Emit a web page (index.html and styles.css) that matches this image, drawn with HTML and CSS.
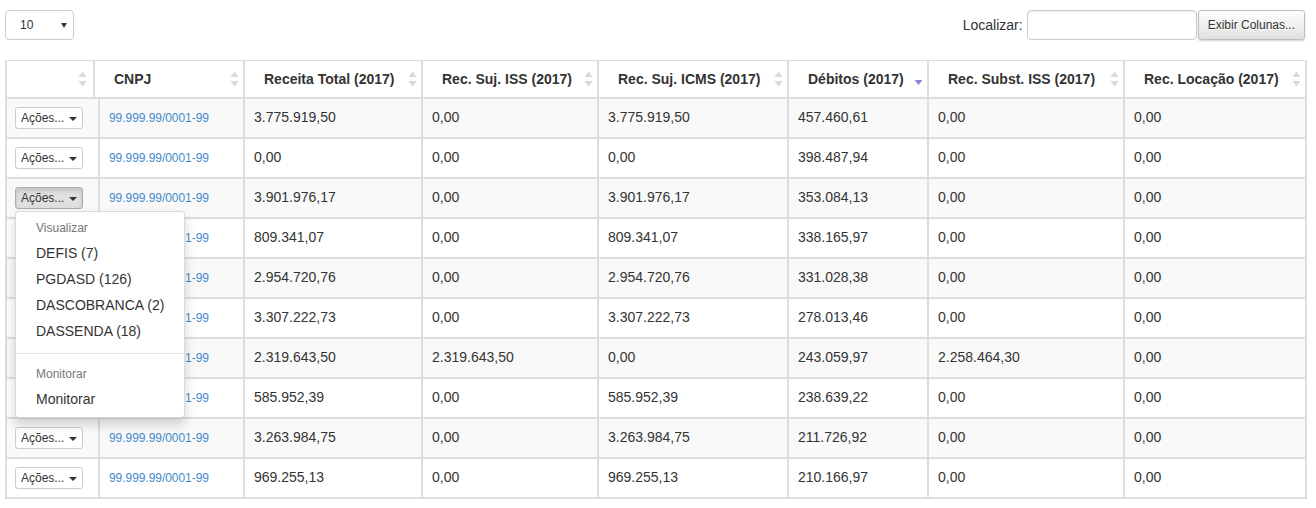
FILE: index.html
```html
<!DOCTYPE html>
<html lang="pt-BR">
<head>
<meta charset="utf-8">
<title>Tabela</title>
<link rel="stylesheet" href="styles.css">
</head>
<body>
<div class="page">
  <div class="toolbar">
    <div class="length">
      <span>10</span>
      <svg class="length-arrow" width="6" height="5" viewBox="0 0 6 5"><path d="M0 0 L6 0 L3 5 Z"/></svg>
    </div>
    <div class="filter">
      <label class="filter-label">Localizar:</label>
      <div class="search"></div>
      <button class="colvis">Exibir Colunas...</button>
    </div>
  </div>

  <div class="grid">
    <div class="thead">
      <div class="th th-first"><span></span><svg class="sort" width="9" height="16" viewBox="0 0 9 16"><path d="M0.5 6 L4.5 0.5 L8.5 6 Z M0.5 10 L4.5 15.5 L8.5 10 Z"/></svg></div>
      <div class="th"><span>CNPJ</span><svg class="sort" width="9" height="16" viewBox="0 0 9 16"><path d="M0.5 6 L4.5 0.5 L8.5 6 Z M0.5 10 L4.5 15.5 L8.5 10 Z"/></svg></div>
      <div class="th"><span>Receita Total (2017)</span><svg class="sort" width="9" height="16" viewBox="0 0 9 16"><path d="M0.5 6 L4.5 0.5 L8.5 6 Z M0.5 10 L4.5 15.5 L8.5 10 Z"/></svg></div>
      <div class="th"><span>Rec. Suj. ISS (2017)</span><svg class="sort" width="9" height="16" viewBox="0 0 9 16"><path d="M0.5 6 L4.5 0.5 L8.5 6 Z M0.5 10 L4.5 15.5 L8.5 10 Z"/></svg></div>
      <div class="th"><span>Rec. Suj. ICMS (2017)</span><svg class="sort" width="9" height="16" viewBox="0 0 9 16"><path d="M0.5 6 L4.5 0.5 L8.5 6 Z M0.5 10 L4.5 15.5 L8.5 10 Z"/></svg></div>
      <div class="th"><span>Débitos (2017)</span><svg class="sort sort-desc" width="9" height="16" viewBox="0 0 9 16"><path d="M0.5 9 L8.5 9 L4.5 14 Z"/></svg></div>
      <div class="th"><span>Rec. Subst. ISS (2017)</span><svg class="sort" width="9" height="16" viewBox="0 0 9 16"><path d="M0.5 6 L4.5 0.5 L8.5 6 Z M0.5 10 L4.5 15.5 L8.5 10 Z"/></svg></div>
      <div class="th th-last"><span>Rec. Locação (2017)</span><svg class="sort" width="9" height="16" viewBox="0 0 9 16"><path d="M0.5 6 L4.5 0.5 L8.5 6 Z M0.5 10 L4.5 15.5 L8.5 10 Z"/></svg></div>
    </div>

    <div class="tbody">
      <div class="tr">
        <div class="td"><div class="btn-group"><button class="btn-xs">Ações... <span class="caret"></span></button></div></div>
        <div class="td"><a class="cnpj" href="#">99.999.99/0001-99</a></div>
        <div class="td">3.775.919,50</div><div class="td">0,00</div><div class="td">3.775.919,50</div><div class="td">457.460,61</div><div class="td">0,00</div><div class="td td-last">0,00</div>
      </div>
      <div class="tr">
        <div class="td"><div class="btn-group"><button class="btn-xs">Ações... <span class="caret"></span></button></div></div>
        <div class="td"><a class="cnpj" href="#">99.999.99/0001-99</a></div>
        <div class="td">0,00</div><div class="td">0,00</div><div class="td">0,00</div><div class="td">398.487,94</div><div class="td">0,00</div><div class="td td-last">0,00</div>
      </div>
      <div class="tr">
        <div class="td"><div class="btn-group"><button class="btn-xs active">Ações... <span class="caret"></span></button>
          <div class="menu">
            <div class="menu-header">Visualizar</div>
            <a class="menu-item" href="#">DEFIS (7)</a>
            <a class="menu-item" href="#">PGDASD (126)</a>
            <a class="menu-item" href="#">DASCOBRANCA (2)</a>
            <a class="menu-item" href="#">DASSENDA (18)</a>
            <div class="menu-divider"></div>
            <div class="menu-header">Monitorar</div>
            <a class="menu-item" href="#">Monitorar</a>
          </div>
        </div></div>
        <div class="td"><a class="cnpj" href="#">99.999.99/0001-99</a></div>
        <div class="td">3.901.976,17</div><div class="td">0,00</div><div class="td">3.901.976,17</div><div class="td">353.084,13</div><div class="td">0,00</div><div class="td td-last">0,00</div>
      </div>
      <div class="tr">
        <div class="td"><div class="btn-group"><button class="btn-xs">Ações... <span class="caret"></span></button></div></div>
        <div class="td"><a class="cnpj" href="#">99.999.99/0001-99</a></div>
        <div class="td">809.341,07</div><div class="td">0,00</div><div class="td">809.341,07</div><div class="td">338.165,97</div><div class="td">0,00</div><div class="td td-last">0,00</div>
      </div>
      <div class="tr">
        <div class="td"><div class="btn-group"><button class="btn-xs">Ações... <span class="caret"></span></button></div></div>
        <div class="td"><a class="cnpj" href="#">99.999.99/0001-99</a></div>
        <div class="td">2.954.720,76</div><div class="td">0,00</div><div class="td">2.954.720,76</div><div class="td">331.028,38</div><div class="td">0,00</div><div class="td td-last">0,00</div>
      </div>
      <div class="tr">
        <div class="td"><div class="btn-group"><button class="btn-xs">Ações... <span class="caret"></span></button></div></div>
        <div class="td"><a class="cnpj" href="#">99.999.99/0001-99</a></div>
        <div class="td">3.307.222,73</div><div class="td">0,00</div><div class="td">3.307.222,73</div><div class="td">278.013,46</div><div class="td">0,00</div><div class="td td-last">0,00</div>
      </div>
      <div class="tr">
        <div class="td"><div class="btn-group"><button class="btn-xs">Ações... <span class="caret"></span></button></div></div>
        <div class="td"><a class="cnpj" href="#">99.999.99/0001-99</a></div>
        <div class="td">2.319.643,50</div><div class="td">2.319.643,50</div><div class="td">0,00</div><div class="td">243.059,97</div><div class="td">2.258.464,30</div><div class="td td-last">0,00</div>
      </div>
      <div class="tr">
        <div class="td"><div class="btn-group"><button class="btn-xs">Ações... <span class="caret"></span></button></div></div>
        <div class="td"><a class="cnpj" href="#">99.999.99/0001-99</a></div>
        <div class="td">585.952,39</div><div class="td">0,00</div><div class="td">585.952,39</div><div class="td">238.639,22</div><div class="td">0,00</div><div class="td td-last">0,00</div>
      </div>
      <div class="tr">
        <div class="td"><div class="btn-group"><button class="btn-xs">Ações... <span class="caret"></span></button></div></div>
        <div class="td"><a class="cnpj" href="#">99.999.99/0001-99</a></div>
        <div class="td">3.263.984,75</div><div class="td">0,00</div><div class="td">3.263.984,75</div><div class="td">211.726,92</div><div class="td">0,00</div><div class="td td-last">0,00</div>
      </div>
      <div class="tr">
        <div class="td"><div class="btn-group"><button class="btn-xs">Ações... <span class="caret"></span></button></div></div>
        <div class="td"><a class="cnpj" href="#">99.999.99/0001-99</a></div>
        <div class="td">969.255,13</div><div class="td">0,00</div><div class="td">969.255,13</div><div class="td">210.166,97</div><div class="td">0,00</div><div class="td td-last">0,00</div>
      </div>
    </div>
  </div>
</div>
</body>
</html>
```

FILE: styles.css
```css
* { box-sizing: border-box; }

body {
  margin: 0;
  background: #fff;
  color: #333;
  font-family: "Liberation Sans", Arial, Helvetica, sans-serif;
  font-size: 14px;
  line-height: 20px;
}

.page {
  padding: 10px 11px 0 5px;
}

.toolbar {
  display: flex;
  justify-content: space-between;
  align-items: center;
  height: 30px;
}

.length {
  width: 69px;
  height: 30px;
  border: 1px solid #ccc;
  border-radius: 4px;
  display: flex;
  align-items: center;
  justify-content: space-between;
  padding: 0 6px 0 14px;
  font-size: 12px;
  color: #333;
}

.length-arrow { fill: #333; }

.filter {
  display: flex;
  align-items: center;
}

.filter-label {
  margin-right: 4px;
  font-size: 14px;
}

.search {
  width: 170px;
  height: 30px;
  border: 1px solid #ccc;
  border-radius: 4px;
  background: #fff;
  box-shadow: inset 0 1px 1px rgba(0, 0, 0, 0.075);
}

.colvis {
  height: 30px;
  margin-left: 1px;
  padding: 0 9px;
  font-family: inherit;
  font-size: 12px;
  color: #333;
  border: 1px solid #bdbdbd;
  border-radius: 3px;
  background: linear-gradient(#ffffff, #e0e0e0);
  text-shadow: 0 1px 0 #fff;
  box-shadow: 0 1px 2px rgba(0, 0, 0, 0.18);
}

.grid {
  margin-top: 20px;
  width: 1302px;
}

.thead {
  display: grid;
  grid-template-columns: 88px 150px 178px 176px 190px 140px 196px 180px;
  border-left: 2px solid #ddd;
  border-right: 2px solid #ddd;
  border-top: 1px solid #ddd;
}

.th {
  height: 38px;
  display: flex;
  align-items: center;
  justify-content: space-between;
  padding: 0 4px 0 19px;
  font-weight: bold;
  border-right: 2px solid #ddd;
  border-bottom: 2px solid #ddd;
  white-space: nowrap;
}

.th-first { padding-right: 6px; }
.th-last { border-right: 0; }

.sort { fill: #d9d9d9; flex: none; }
.sort-desc { fill: #8c84d6; }

.tr {
  display: grid;
  grid-template-columns: 93px 145px 178px 176px 190px 140px 196px 180px;
  border-left: 2px solid #ddd;
  border-right: 2px solid #ddd;
}

.tr:nth-child(odd) { background: #f9f9f9; }

.td {
  height: 40px;
  padding: 8px 8px 8px 9px;
  border-right: 2px solid #ddd;
  border-bottom: 2px solid #ddd;
  white-space: nowrap;
}

.tr .td:first-child { padding-left: 8px; }
.td-last { border-right: 0; }

.cnpj {
  color: #428bca;
  text-decoration: none;
  font-size: 12px;
  line-height: 17px;
  letter-spacing: -0.05px;
}

.btn-group {
  position: relative;
  display: inline-block;
  vertical-align: top;
}

.btn-xs {
  display: inline-block;
  height: 22px;
  padding: 0 5px;
  font-family: inherit;
  font-size: 12px;
  line-height: 20px;
  color: #333;
  background: #fff;
  border: 1px solid #ccc;
  border-radius: 3px;
  white-space: nowrap;
}

.btn-xs.active {
  background: #e0e0e0;
  border-color: #adadad;
  box-shadow: inset 0 3px 5px rgba(0, 0, 0, 0.125);
}

.caret {
  display: inline-block;
  width: 0;
  height: 0;
  margin-left: 1px;
  vertical-align: middle;
  border-top: 4px solid #333;
  border-left: 4px solid transparent;
  border-right: 4px solid transparent;
}

.menu {
  position: absolute;
  top: 100%;
  left: 0;
  z-index: 1000;
  margin-top: 2px;
  min-width: 160px;
  padding: 5px 0;
  background: #fff;
  border: 1px solid rgba(0, 0, 0, 0.15);
  border-radius: 4px;
  box-shadow: 0 6px 12px rgba(0, 0, 0, 0.175);
  font-size: 14px;
}

.menu-header {
  padding: 1px 20px 2px;
  font-size: 12px;
  line-height: 20px;
  color: #777;
  white-space: nowrap;
}

.menu-item {
  display: block;
  padding: 3px 20px;
  line-height: 20px;
  color: #333;
  text-decoration: none;
  white-space: nowrap;
}

.menu-divider {
  height: 1px;
  margin: 9px 0;
  background: #e5e5e5;
  overflow: hidden;
}
```
